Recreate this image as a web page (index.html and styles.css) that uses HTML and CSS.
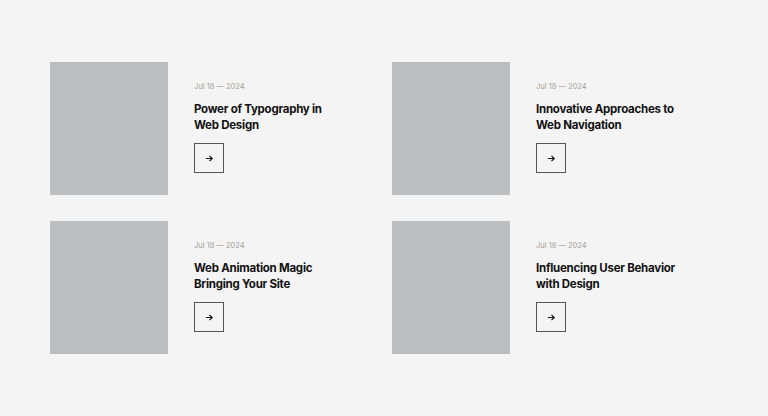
FILE: index.html
```html
<!DOCTYPE html>
<html lang="en">
<head>
    <meta charset="UTF-8">
    <meta name="viewport" content="width=device-width, initial-scale=1.0">
    <title>Blog</title>
    <link rel="stylesheet" href="styles.css">
</head>
<body>
    <div class="container">
        <div class="post">
            <div class="thumb"></div>
            <div class="info">
                <span class="date">Jul 18 — 2024</span>
                <h3>Power of Typography in Web Design</h3>
                <a class="more" href="#"><svg width="9" height="9" viewBox="0 0 10 10"><path d="M1 5h7M5 2l3 3-3 3" fill="none" stroke="#111" stroke-width="1.3"/></svg></a>
            </div>
        </div>
        <div class="post">
            <div class="thumb"></div>
            <div class="info">
                <span class="date">Jul 18 — 2024</span>
                <h3>Innovative Approaches to Web Navigation</h3>
                <a class="more" href="#"><svg width="9" height="9" viewBox="0 0 10 10"><path d="M1 5h7M5 2l3 3-3 3" fill="none" stroke="#111" stroke-width="1.3"/></svg></a>
            </div>
        </div>
        <div class="post">
            <div class="thumb"></div>
            <div class="info">
                <span class="date">Jul 18 — 2024</span>
                <h3>Web Animation Magic Bringing Your Site</h3>
                <a class="more" href="#"><svg width="9" height="9" viewBox="0 0 10 10"><path d="M1 5h7M5 2l3 3-3 3" fill="none" stroke="#111" stroke-width="1.3"/></svg></a>
            </div>
        </div>
        <div class="post">
            <div class="thumb"></div>
            <div class="info">
                <span class="date">Jul 18 — 2024</span>
                <h3>Influencing User Behavior with Design</h3>
                <a class="more" href="#"><svg width="9" height="9" viewBox="0 0 10 10"><path d="M1 5h7M5 2l3 3-3 3" fill="none" stroke="#111" stroke-width="1.3"/></svg></a>
            </div>
        </div>
    </div>
</body>
</html>
```

FILE: styles.css
```css
body {
    font-family: Inter, "Noto Sans", sans-serif;
    margin: 0;
    padding: 0;
    background-color: #f4f4f4;
    color: #111;
}
.container {
    display: grid;
    grid-template-columns: 316px 316px;
    column-gap: 26px;
    row-gap: 26px;
    padding: 62px 0 0 50px;
}
.post {
    display: flex;
    gap: 26px;
}
.thumb {
    width: 118px;
    height: 133px;
    background-color: #bdbebf;
    flex-shrink: 0;
}
.info {
    padding-top: 20px;
}
.date {
    display: block;
    font-size: 7.5px;
    line-height: 9px;
    color: #a59f98;
}
.info h3 {
    margin: 10px 0 10px;
    font-size: 11.5px;
    line-height: 16px;
    font-weight: 700;
    letter-spacing: -0.25px;
    width: 150px;
}
.more {
    display: flex;
    align-items: center;
    justify-content: center;
    width: 28px;
    height: 28px;
    border: 1px solid #555;
}
```
